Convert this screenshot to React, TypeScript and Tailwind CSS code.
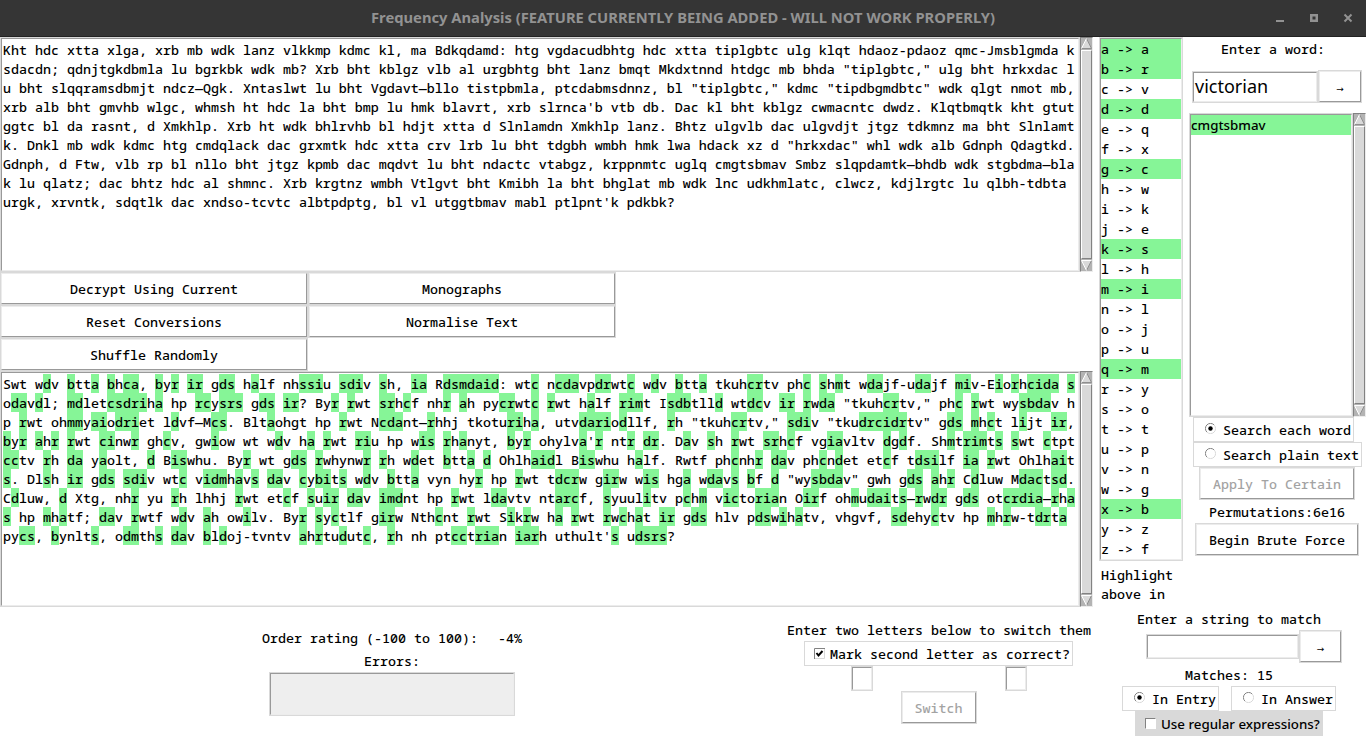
import React from 'react';

const MONO = "font-['Noto_Sans_Mono','DejaVu_Sans_Mono',monospace] text-[13.333px]";
const CIPHER = [
  'Kht hdc xtta xlga, xrb mb wdk lanz vlkkmp kdmc kl, ma Bdkqdamd: htg vgdacudbhtg hdc xtta tiplgbtc ulg klqt hdaoz-pdaoz qmc-Jmsblgmda k',
  'sdacdn; qdnjtgkdbmla lu bgrkbk wdk mb? Xrb bht kblgz vlb al urgbhtg bht lanz bmqt Mkdxtnnd htdgc mb bhda "tiplgbtc," ulg bht hrkxdac l',
  'u bht slqqramsdbmjt ndcz—Qgk. Xntaslwt lu bht Vgdavt—bllo tistpbmla, ptcdabmsdnnz, bl "tiplgbtc," kdmc "tipdbgmdbtc" wdk qlgt nmot mb,',
  "xrb alb bht gmvhb wlgc, whmsh ht hdc la bht bmp lu hmk blavrt, xrb slrnca'b vtb db. Dac kl bht kblgz cwmacntc dwdz. Klqtbmqtk kht gtut",
  'ggtc bl da rasnt, d Xmkhlp. Xrb ht wdk bhlrvhb bl hdjt xtta d Slnlamdn Xmkhlp lanz. Bhtz ulgvlb dac ulgvdjt jtgz tdkmnz ma bht Slnlamt',
  'k. Dnkl mb wdk kdmc htg cmdqlack dac grxmtk hdc xtta crv lrb lu bht tdgbh wmbh hmk lwa hdack xz d "hrkxdac" whl wdk alb Gdnph Qdagtkd.',
  'Gdnph, d Ftw, vlb rp bl nllo bht jtgz kpmb dac mqdvt lu bht ndactc vtabgz, krppnmtc uglq cmgtsbmav Smbz slqpdamtk—bhdb wdk stgbdma—bla',
  'k lu qlatz; dac bhtz hdc al shmnc. Xrb krgtnz wmbh Vtlgvt bht Kmibh la bht bhglat mb wdk lnc udkhmlatc, clwcz, kdjlrgtc lu qlbh-tdbta',
  "urgk, xrvntk, sdqtlk dac xndso-tcvtc albtpdptg, bl vl utggtbmav mabl ptlpnt'k pdkbk?",
];
const PLAIN = [
  'Swt wdv btta bhca, byr ir gds half nhssiu sdiv sh, ia Rdsmdaid: wtc ncdavpdrwtc wdv btta tkuhcrtv phc shmt wdajf-udajf miv-Eiorhcida s',
  'odavdl; mdletcsdriha hp rcysrs gds ir? Byr rwt srhcf nhr ah pycrwtc rwt half rimt Isdbtlld wtdcv ir rwda "tkuhcrtv," phc rwt wysbdav h',
  'p rwt ohmmyaiodriet ldvf—Mcs. Bltaohgt hp rwt Ncdant—rhhj tkoturiha, utvdariodllf, rh "tkuhcrtv," sdiv "tkudrcidrtv" gds mhct lijt ir,',
  "byr ahr rwt cinwr ghcv, gwiow wt wdv ha rwt riu hp wis rhanyt, byr ohylva'r ntr dr. Dav sh rwt srhcf vgiavltv dgdf. Shmtrimts swt ctpt",
  'cctv rh da yaolt, d Biswhu. Byr wt gds rwhynwr rh wdet btta d Ohlhaidl Biswhu half. Rwtf phcnhr dav phcndet etcf tdsilf ia rwt Ohlhait',
  's. Dlsh ir gds sdiv wtc vidmhavs dav cybits wdv btta vyn hyr hp rwt tdcrw girw wis hga wdavs bf d "wysbdav" gwh gds ahr Cdluw Mdactsd.',
  'Cdluw, d Xtg, nhr yu rh lhhj rwt etcf suir dav imdnt hp rwt ldavtv ntarcf, syuulitv pchm victorian Oirf ohmudaits—rwdr gds otcrdia—rha',
  's hp mhatf; dav rwtf wdv ah owilv. Byr syctlf girw Nthcnt rwt Sikrw ha rwt rwchat ir gds hlv pdswihatv, vhgvf, sdehyctv hp mhrw-tdrta',
  "pycs, bynlts, odmths dav bldoj-tvntv ahrtudutc, rh nh ptcctrian iarh uthult's udsrs?",
];
const PAIRS = 'aa br cv dd eq fx gc hw ik je ks lh mi nl oj pu qm ry so tt up vn wg xb yz zf'.split(' ');
const CERTAIN = /([abcdimrs]+)/;

function Arrow({ down = false }: { down?: boolean }) {
  return (
    <svg width="11" height="11" viewBox="0 0 11 11" className="block shrink-0">
      {down ? (
        <>
          <path d="M0.5 0.5H10.5L5.5 10.5Z" fill="#d9d9d9" />
          <path d="M10.5 0.5L5.5 10.5" stroke="#8f8f8f" fill="none" />
          <path d="M10.5 0.5H0.5L5.5 10.5" stroke="#fff" fill="none" />
        </>
      ) : (
        <>
          <path d="M5.5 0.5L10.5 10.5H0.5Z" fill="#d9d9d9" />
          <path d="M0.5 10.5H10.5L5.5 0.5" stroke="#8f8f8f" fill="none" />
          <path d="M0.5 10.5L5.5 0.5" stroke="#fff" fill="none" />
        </>
      )}
    </svg>
  );
}

function Scrollbar() {
  return (
    <div className="flex w-[13px] shrink-0 flex-col border border-t-[#828282] border-l-[#828282] border-r-[#ececec] border-b-[#ececec] bg-[#b3b3b3]">
      <Arrow />
      <div className="my-px flex-1 border border-t-white border-l-white border-r-[#828282] border-b-[#828282] bg-[#d9d9d9]" />
      <Arrow down />
    </div>
  );
}

const SUNK = 'border border-t-[#999] border-l-[#999] border-r-[#ececec] border-b-[#ececec]';

function TextArea({ children, className }: { children: React.ReactNode; className: string }) {
  return (
    <div className={`flex w-[1093px] ${className}`}>
      <div className="w-[1080px] border border-[#d9d9d9]">
        <div className={`h-full pt-px pl-px leading-[21px] ${SUNK}`}>{children}</div>
      </div>
      <Scrollbar />
    </div>
  );
}

function Button({ children, className = '' }: { children: React.ReactNode; className?: string }) {
  return (
    <button className={`block border border-[#d9d9d9] ${className}`}>
      <span className="flex h-full w-full items-center justify-center border border-t-[#ececec] border-l-[#ececec] border-r-[#999] border-b-[#999] pt-[2px] whitespace-pre">
        {children}
      </span>
    </button>
  );
}

function GoButton({ className }: { className: string }) {
  return (
    <Button className={className}>
      <span className="pt-[4px] font-['DejaVu_Sans',sans-serif] text-[9px] font-normal">→</span>
    </Button>
  );
}

function Field({ children, className = '' }: { children?: React.ReactNode; className?: string }) {
  return (
    <div className={`border border-[#d9d9d9] ${className}`}>
      <div className={`flex h-full items-center ${SUNK}`}>{children}</div>
    </div>
  );
}

function Radio({ on = false, label, className = '' }: { on?: boolean; label: string; className?: string }) {
  return (
    <div className={`flex h-[25px] items-center border border-[#d9d9d9] whitespace-pre ${className}`}>
      <svg width="11" height="11" viewBox="0 0 11 11" className="mt-[-2px] mr-[7px] ml-[11px] shrink-0">
        <path d="M1.9 9.1A5 5 0 0 1 9.1 1.9" fill="none" stroke="#828282" />
        <path d="M9.1 1.9A5 5 0 0 1 1.9 9.1" fill="none" stroke="#d9d9d9" />
        {on && <circle cx="5.5" cy="5.5" r="2.2" fill="#000" />}
      </svg>
      <span className="pt-[2px]">{label}</span>
    </div>
  );
}

export default function App() {
  return (
    <div className={`h-[736px] w-[1366px] overflow-hidden bg-white leading-[19px] font-medium text-black ${MONO}`}>
      <header className="flex h-[37px] items-center border-b border-[#222] bg-[#353535] font-['Noto_Sans',sans-serif] text-[#929292]">
        <div className="w-[100px]" />
        <h1 className="flex-1 pb-[2px] text-center text-[14.74px] font-bold whitespace-nowrap">
          Frequency Analysis (FEATURE CURRENTLY BEING ADDED - WILL NOT WORK PROPERLY)
        </h1>
        <svg width="100" height="36" viewBox="0 0 100 36" fill="none" stroke="#929292" strokeWidth="2">
          <path d="M10 21H18" />
          <path d="M45.25 15.25H50.75V20.75H45.25Z" strokeWidth="2.5" />
          <path d="M78.500 14.500L85.500 21.500M85.500 14.500L78.500 21.500" />
        </svg>
      </header>

      <div className="flex">
        <main className="w-[1099px]">
          <TextArea className="h-[235px]">
            {CIPHER.map((line) => (
              <div key={line} className="h-[19px] whitespace-pre">{line}</div>
            ))}
          </TextArea>
          <div className="grid w-[616px] grid-cols-2">
            {['Decrypt Using Current', 'Monographs', 'Reset Conversions', 'Normalise Text', 'Shuffle Randomly'].map((t) => (
              <Button key={t} className="h-[33px]">{t}</Button>
            ))}
          </div>
          <TextArea className="h-[236px]">
            {PLAIN.map((line) => (
              <div key={line} className="flex h-[19px] whitespace-pre">
                {line.split(CERTAIN).map((part, i) => (
                  <span key={i} className={i % 2 ? 'bg-[#86f597]' : ''}>{part}</span>
                ))}
              </div>
            ))}
          </TextArea>
          <div className="flex">
            <section className="flex w-[784px] flex-col items-center pt-[22px]">
              <p className="whitespace-pre">Order rating (-100 to 100):<span className="ml-[20px]">-4%</span></p>
              <p className="mt-[4px]">Errors:</p>
              <Field className="mt-px h-[44px] w-[246px] bg-[#eee]" />
            </section>
            <section className="flex w-[309px] flex-col items-center pt-[14px]">
              <p className="pl-px whitespace-nowrap">Enter two letters below to switch them</p>
              <div className="mt-px flex h-[25px] w-[269px] items-center border border-[#d9d9d9] whitespace-nowrap">
                <svg width="11" height="11" viewBox="0 0 11 11" className="mt-[-1px] mr-[5px] ml-[9px] shrink-0" fill="none">
                  <path d="M0.500 11V0.500H11" stroke="#828282" />
                  <path d="M10.500 1V10.500H1" stroke="#d9d9d9" />
                  <path d="M2.500 5L4.500 7.500L8.500 3" stroke="#000" strokeWidth="2" />
                </svg>
                <span className="pt-[2px]">Mark second letter as correct?</span>
              </div>
              <div className="flex gap-[132px]">
                <Field className="h-[25px] w-[22px]" />
                <Field className="h-[25px] w-[22px]" />
              </div>
              <Button className="h-[33px] w-[76px] text-[#a3a3a3]">Switch</Button>
            </section>
          </div>
        </main>

        <aside className="w-[267px]">
          <div className="flex">
            <div className="w-[84px] shrink-0 border border-[#d9d9d9]">
              <ul className={SUNK}>
                {PAIRS.map((p) => (
                  <li key={p} className={`h-[20px] leading-[20px] whitespace-pre ${'abdgkmqx'.includes(p[0]) ? 'bg-[#86f597]' : ''}`}>
                    {`${p[0]} -> ${p[1]}`}
                  </li>
                ))}
              </ul>
            </div>
            <div className="w-[183px]">
              <p className="mt-[3px] ml-[38px]">Enter a word:</p>
              <div className="mt-[11px] ml-[9px] flex items-end">
                <Field className="h-[32px] w-[126px] font-['Noto_Sans',sans-serif] text-[18px] font-normal">
                  <span className="pb-[2px] pl-px">victorian</span>
                </Field>
                <GoButton className="h-[33px] w-[44px]" />
              </div>
              <div className="mt-[10px] ml-[6px] flex h-[304px] w-[177px] overflow-hidden">
                <div className="w-[164px] shrink-0 border border-[#d9d9d9]">
                  <div className={`h-full ${SUNK}`}>
                    <div className="h-[20px] bg-[#86f597] font-['Noto_Sans',sans-serif] text-[13.333px] leading-[21px]">cmgtsbmav</div>
                  </div>
                </div>
                <Scrollbar />
              </div>
              <Radio on label="Search each word" className="ml-[10px] w-[161px]" />
              <Radio label="Search plain text" className="ml-[10px] w-[169px]" />
              <Button className="ml-[16px] h-[33px] w-[156px] text-[#a3a3a3]">Apply To Certain</Button>
              <p className="mt-[3px] ml-[26px]">Permutations:6e16</p>
              <Button className="mt-px ml-[12px] h-[33px] w-[164px]">Begin Brute Force</Button>
            </div>
          </div>
          <p className="mt-[5px] ml-[2px] whitespace-pre">{'Highlight\nabove in'}</p>
          <p className="mt-[6px] ml-[38px]">Enter a string to match</p>
          <div className="mt-px ml-[47px] flex items-center">
            <Field className="h-[25px] w-[153px]" />
            <GoButton className="h-[33px] w-[43px]" />
          </div>
          <p className="mt-[3px] ml-[86px]">Matches: 15</p>
          <div className="mt-px ml-[23px] flex gap-[12px]">
            <Radio on label="In Entry" className="w-[97px]" />
            <Radio label="In Answer" className="w-[105px]" />
          </div>
          <div className="ml-[36px] flex h-[25px] w-[188px] items-center bg-[#d9d9d9] pl-[10px] font-['Noto_Sans',sans-serif] text-[13.333px] whitespace-nowrap">
            <div className="mr-[5px] h-[11px] w-[11px] border border-t-[#828282] border-l-[#828282] border-r-white border-b-white bg-white" />
            <span className="pt-[2px]">Use regular expressions?</span>
          </div>
        </aside>
      </div>
    </div>
  );
}
